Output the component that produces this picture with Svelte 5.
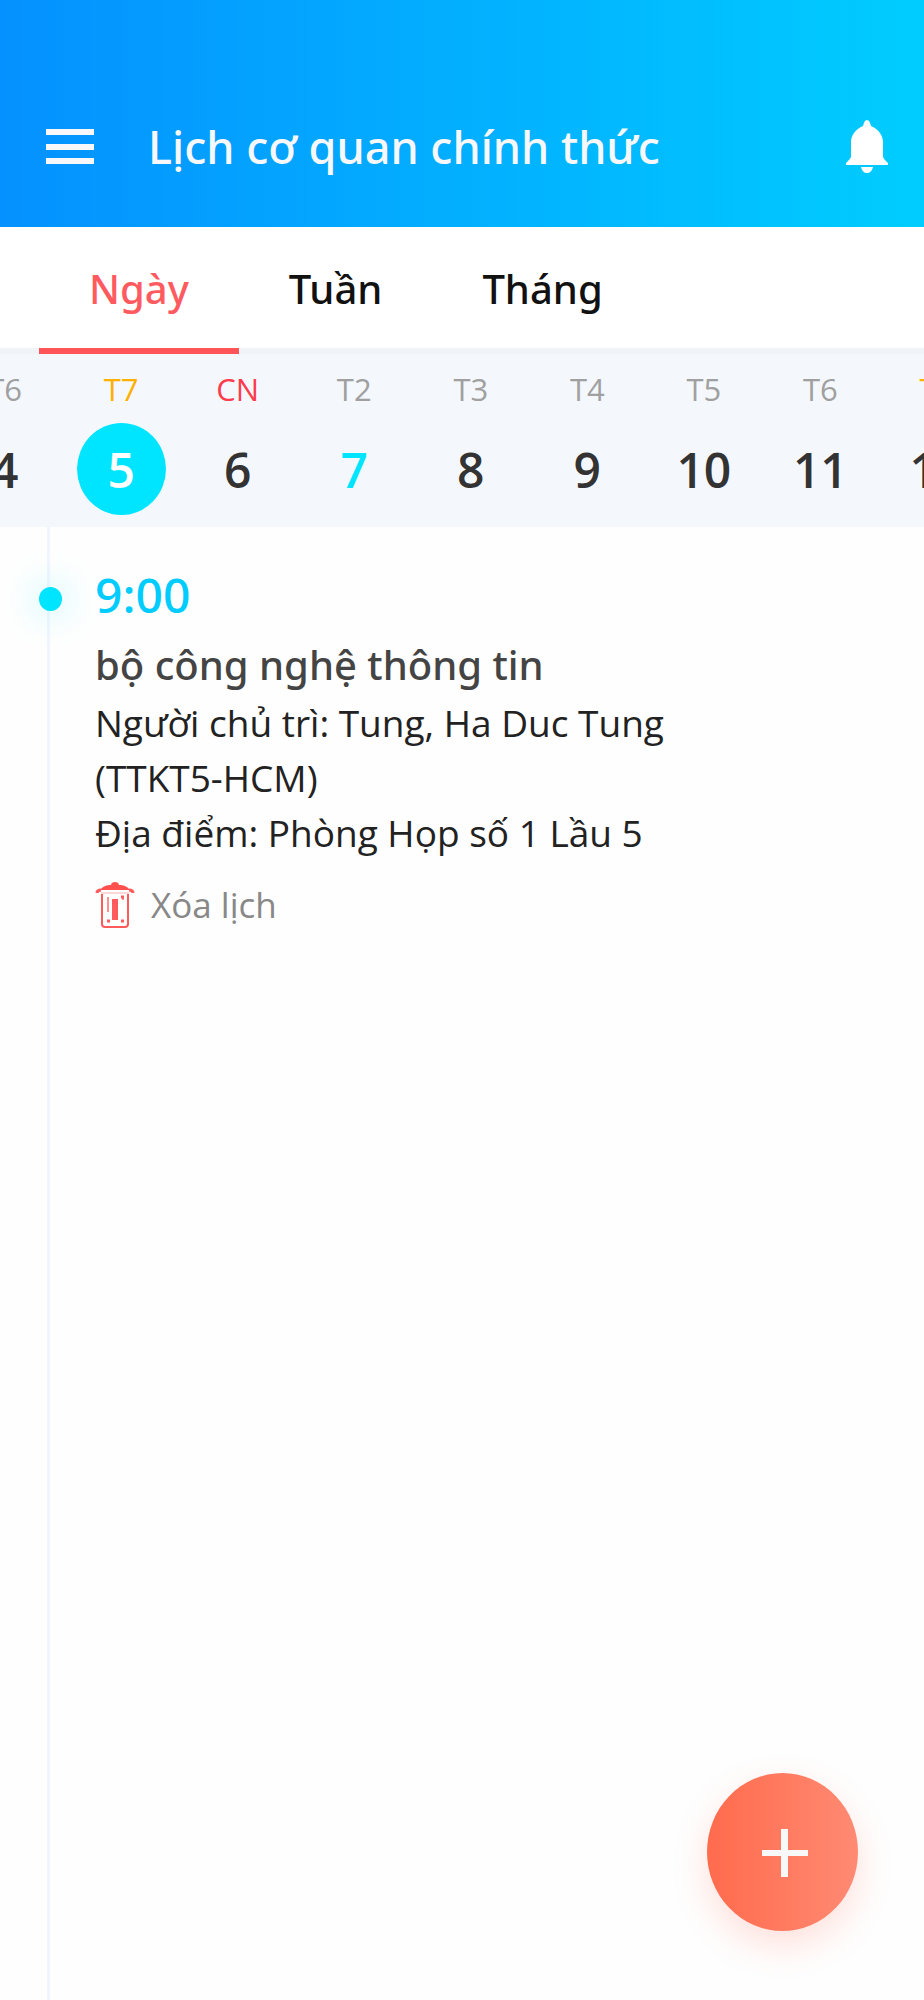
<script lang="ts">
  let activeTab = $state('day')
  let selected = $state(5)

  const today = 7
  const tabs = [
    { id: 'day', label: 'Ngày' },
    { id: 'week', label: 'Tuần' },
    { id: 'month', label: 'Tháng' }
  ]
  const weekdays = ['CN', 'T2', 'T3', 'T4', 'T5', 'T6', 'T7']
  // day 6 is a Sunday
  const days = [4, 5, 6, 7, 8, 9, 10, 11, 12].map((date) => ({
    date,
    wd: (date + 1) % 7
  }))

  let events = $state([
    {
      time: '9:00',
      title: 'bộ công nghệ thông tin',
      host: 'Tung, Ha Duc Tung (TTKT5-HCM)',
      place: 'Phòng Họp số 1 Lầu 5'
    }
  ])

  function remove(i: number) {
    events.splice(i, 1)
  }
</script>

<div class="app">
  <header>
    <button class="icon-btn" aria-label="Menu">
      <svg width="48" height="36" viewBox="0 0 48 36" fill="#f8f8fa">
        <rect y="0" width="48" height="6" />
        <rect y="15" width="48" height="6" />
        <rect y="29" width="48" height="6" />
      </svg>
    </button>
    <h1>Lịch cơ quan chính thức</h1>
    <button class="icon-btn" aria-label="Thông báo">
      <svg width="42" height="54" viewBox="0 0 42 54" fill="#fff">
        <path d="M21 0c-2 0-3 2-4 6C10 9 5 15 5 22v14c0 2-1 3-5 7v2h42v-2c-4-4-5-5-5-7V22C37 15 32 9 25 6c-1-4-2-6-4-6z" />
        <path d="M15 47h12c-1 4-3 6-6 6s-5-2-6-6z" />
      </svg>
    </button>
  </header>

  <nav class="tabs">
    {#each tabs as tab}
      <button class="tab" class:active={activeTab === tab.id} onclick={() => (activeTab = tab.id)}>
        {tab.label}
      </button>
    {/each}
  </nav>

  <div class="strip">
    <div class="days">
      {#each days as d}
        <button
          class="day"
          class:sat={d.wd === 6}
          class:sun={d.wd === 0}
          class:today={d.date === today}
          class:selected={d.date === selected}
          onclick={() => (selected = d.date)}
        >
          <span class="wd">{weekdays[d.wd]}</span>
          <span class="num">{d.date}</span>
        </button>
      {/each}
    </div>
  </div>

  <main>
    {#each events as ev, i}
      <article>
        <span class="dot"></span>
        <div class="time">{ev.time}</div>
        <h2>{ev.title}</h2>
        <p>Người chủ trì: {ev.host}</p>
        <p>Địa điểm: {ev.place}</p>
        <button class="delete" onclick={() => remove(i)}>
          <svg width="40" height="48" viewBox="0 0 40 48" fill="none" stroke="#ff5a5c">
            <path d="M5 9C8 5 12 4 16 4c0-4 8-4 8 0 4 0 8 1 11 5z" fill="#ff5050" stroke="none" />
            <path d="M6 9C3 9 2 10 2 12M34 9c3 0 4 1 4 3" stroke-width="3" />
            <path d="M6 12h28" stroke-width="1" stroke="#ffb0b0" />
            <path d="M7 13v30c0 2 1 3 3 3h20c2 0 3-1 3-3V13" stroke-width="2" />
            <path d="M13 16v15M28 16v3" stroke-width="2" stroke="#ff9090" />
            <path d="M12 40h3M26 40h3M26 16h3" stroke-width="3" />
            <path d="M20 18v21" stroke-width="6" />
          </svg>
          Xóa lịch
        </button>
      </article>
    {/each}
  </main>

  <button class="fab" aria-label="Thêm lịch">
    <svg width="46" height="48" viewBox="0 0 46 48" fill="#f8f8f8">
      <rect x="0" y="21" width="46" height="6" />
      <rect x="19" y="0" width="7" height="48" />
    </svg>
  </button>
</div>

<style>
  :global(body) {
    background: #fefefe;
  }
  .app {
    min-height: 100vh;
    display: flex;
    flex-direction: column;
    overflow-x: hidden;
    font-family: 'Noto Sans', 'Open Sans', sans-serif;
  }
  button {
    font: inherit;
    border: 0;
    padding: 0;
    background: none;
    cursor: pointer;
  }
  svg {
    display: block;
  }

  header {
    display: flex;
    align-items: center;
    padding: 67px 36px 0 46px;
    height: 160px;
    background: linear-gradient(90deg, #0591ff, #00cdff);
  }
  h1 {
    flex: 1;
    margin: 0 0 0 54px;
    font-size: 45px;
    line-height: 64px;
    font-weight: 500;
    color: #f8f8fa;
    white-space: nowrap;
  }

  .tabs {
    display: flex;
    padding-left: 39px;
    background: #fff;
    border-bottom: 6px solid #f0f4f8;
  }
  .tab {
    height: 127px;
    padding: 2px 50px 0;
    margin-bottom: -6px;
    border-bottom: 6px solid transparent;
    font-size: 40px;
    font-weight: 500;
    color: #111;
  }
  .tab.active {
    color: #ff5a5f;
    border-bottom-color: #ff5558;
  }

  .strip {
    overflow: hidden;
    background: #f4f8fd;
  }
  .days {
    display: grid;
    grid-template-columns: repeat(9, 1fr);
    width: 113.5%;
    margin-left: -5.8%;
  }
  .day {
    display: flex;
    flex-direction: column;
    align-items: center;
    padding: 12px 0 12px;
    gap: 11px;
    color: #333;
    font-family: 'Open Sans', 'Noto Sans', sans-serif;
  }
  .wd {
    font-size: 31px;
    line-height: 46px;
    color: #a0a0a0;
  }
  .sat .wd {
    color: #ffb000;
  }
  .sun .wd {
    color: #ff3b4e;
  }
  .num {
    display: grid;
    place-items: center;
    width: 89px;
    height: 92px;
    border-radius: 50%;
    font-size: 48px;
    font-weight: 600;
  }
  .today .num {
    color: #00e5ff;
  }
  .selected .num {
    color: #fff;
    background: #00e5ff;
  }

  main {
    flex: 1;
    margin-left: 47px;
    border-left: 3px solid #f2f5ff;
    padding: 32px 200px 120px 45px;
  }
  article {
    position: relative;
  }
  .dot {
    position: absolute;
    left: -56px;
    top: 28px;
    width: 23px;
    height: 24px;
    border-radius: 50%;
    background: #00e5ff;
    box-shadow: 0 0 36px rgba(0, 229, 255, 0.4);
  }
  .time {
    font-size: 48px;
    line-height: 72px;
    font-weight: 500;
    color: #00ccff;
  }
  h2 {
    margin: 4px 0 0;
    font-size: 40px;
    line-height: 60px;
    font-weight: 500;
    color: #444;
  }
  p {
    margin: 0;
    font-family: 'Open Sans', 'Noto Sans', sans-serif;
    font-size: 37px;
    line-height: 55px;
    color: #222;
  }
  .delete {
    display: flex;
    align-items: center;
    gap: 16px;
    margin-top: 20px;
    font-family: 'Open Sans', 'Noto Sans', sans-serif;
    font-size: 35px;
    line-height: 50px;
    color: #888;
  }

  .fab {
    box-sizing: border-box;
    position: fixed;
    right: 66px;
    bottom: 69px;
    display: grid;
    place-items: center;
    width: 151px;
    height: 158px;
    padding: 2px 0 0 4px;
    border-radius: 50%;
    background: linear-gradient(90deg, #ff6b4d, #ff8a73);
    box-shadow: 0 14px 36px rgba(255, 107, 77, 0.2);
  }
</style>
